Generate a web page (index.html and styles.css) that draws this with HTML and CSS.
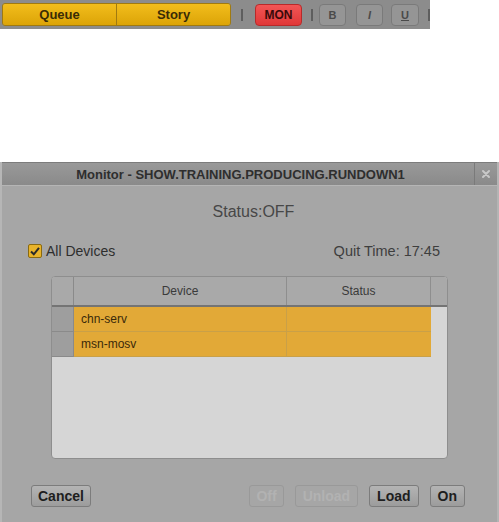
FILE: index.html
```html
<!DOCTYPE html>
<html lang="en">
  <head>
    <meta charset="UTF-8" />
    <title>Monitor</title>
    <link rel="stylesheet" href="styles.css">
  </head>
  <body>
    <!-- Toolbar -->
    <div class="toolbar">
      <div class="tab-group">
        <button class="tab">Queue</button>
        <button class="tab">Story</button>
      </div>
      <span class="sep"></span>
      <button class="tool mon">MON</button>
      <span class="sep"></span>
      <button class="tool bold">B</button>
      <button class="tool italic">I</button>
      <button class="tool underline">U</button>
      <span class="sep last"></span>
    </div>

    <!-- Monitor dialog -->
    <div class="dialog">
      <div class="dialog-title">
        <span class="title-text">Monitor - SHOW.TRAINING.PRODUCING.RUNDOWN1</span>
        <span class="close">
          <svg width="10" height="10" viewBox="0 0 10 10">
            <path d="M2 2 L8 8 M8 2 L2 8" stroke="#c8c8c8" stroke-width="2" stroke-linecap="round" />
          </svg>
        </span>
      </div>

      <div class="dialog-body">
        <div class="status">Status:OFF</div>

        <div class="options">
          <label class="check">
            <span class="box">
              <svg width="12" height="12" viewBox="0 0 12 12">
                <path d="M2 6.5 L4.8 9.3 L10 2.8" fill="none" stroke="#2a2a2a" stroke-width="2" />
              </svg>
            </span>
            All Devices
          </label>
          <span class="quit">Quit Time: 17:45</span>
        </div>

        <div class="table">
          <div class="row head">
            <div class="cell corner"></div>
            <div class="cell device">Device</div>
            <div class="cell state">Status</div>
            <div class="cell filler"></div>
          </div>
          <div class="row item">
            <div class="cell corner"></div>
            <div class="cell device">chn-serv</div>
            <div class="cell state"></div>
          </div>
          <div class="row item">
            <div class="cell corner"></div>
            <div class="cell device">msn-mosv</div>
            <div class="cell state"></div>
          </div>
        </div>

        <div class="actions">
          <button class="btn">Cancel</button>
          <div class="right-actions">
            <button class="btn disabled">Off</button>
            <button class="btn disabled">Unload</button>
            <button class="btn">Load</button>
            <button class="btn">On</button>
          </div>
        </div>
      </div>
    </div>
  </body>
</html>
```

FILE: styles.css
```css
body {
  margin: 0;
  background: #ffffff;
  font-family: "Liberation Sans", Arial, sans-serif;
  width: 499px;
  height: 522px;
  overflow: hidden;
}

button {
  font-family: "Liberation Sans", Arial, sans-serif;
  cursor: pointer;
}

/* Toolbar */
.toolbar {
  width: 430px;
  height: 29px;
  background: #8c8c8c;
  display: flex;
  align-items: center;
  padding-left: 2px;
  box-sizing: border-box;
  overflow: hidden;
}

.toolbar > * {
  flex-shrink: 0;
}

.tab-group {
  display: flex;
  height: 23px;
  border-radius: 3px;
  overflow: hidden;
  border: 1px solid #a07a10;
  box-sizing: border-box;
}

.tab {
  width: 113px;
  height: 100%;
  border: none;
  background: linear-gradient(#f2bd1c, #dca407);
  color: #3a2c05;
  font-weight: bold;
  font-size: 13px;
  padding: 0;
}

.tab + .tab {
  width: 114px;
  border-left: 1px solid #a07a10;
}

.sep {
  width: 2px;
  height: 12px;
  background: #5e5e5e;
  margin: 0 10px;
}

.sep.last {
  margin-left: 9px;
}

.tool {
  width: 27px;
  height: 22px;
  border: 1px solid #7a7a7a;
  border-radius: 4px;
  background: #959595;
  color: #4a4a4a;
  font-weight: bold;
  font-size: 11px;
  padding: 0;
}

.tool.mon {
  width: 47px;
  margin-left: 2px;
  margin-right: -1px;
  background: linear-gradient(#f25656, #e03838);
  border-color: #b82a2a;
  color: #3a0a0a;
  font-size: 12px;
}

.tool.bold {
  margin-left: -4px;
}

.tool.italic {
  font-style: italic;
  margin: 0 8px 0 10px;
}

.tool.underline {
  width: 28px;
  text-decoration: underline;
}

/* Dialog */
.dialog {
  margin-top: 133px;
  height: 360px;
  background: #a6a6a6;
  border-left: 2px solid #b6b6b6;
  border-right: 2px solid #b4b4b4;
  box-sizing: border-box;
}

.dialog-title {
  height: 22px;
  display: flex;
  align-items: center;
  background: linear-gradient(#999999, #8a8a8a);
  border-top: 1px solid #7c7c7c;
  border-bottom: 1px solid #b5b5b5;
}

.title-text {
  flex: 1;
  text-align: center;
  font-size: 13px;
  font-weight: bold;
  color: #2e2e2e;
  padding-left: 5px;
}

.close {
  width: 22px;
  height: 100%;
  border-left: 1px solid #7a7a7a;
  display: flex;
  align-items: center;
  justify-content: center;
}

.dialog-body {
  padding: 17px 49px 0 27px;
}

.status {
  text-align: center;
  font-size: 16px;
  color: #474747;
  padding-left: 30px;
}

.options {
  display: flex;
  justify-content: space-between;
  align-items: center;
  margin-top: 19px;
  height: 20px;
}

.check {
  display: flex;
  align-items: center;
  font-size: 14px;
  color: #2e2e2e;
  gap: 4px;
  margin-top: 1px;
  margin-left: -1px;
}

.box {
  width: 14px;
  height: 14px;
  background: #e8b32a;
  border: 1px solid #8a6a10;
  border-radius: 2px;
  display: flex;
  align-items: center;
  justify-content: center;
  box-sizing: border-box;
}

.quit {
  font-size: 14.5px;
  color: #3e3e3e;
  margin-top: 1px;
  margin-right: 8px;
}

/* Table */
.table {
  margin: 16px 0 0 22px;
  height: 181px;
  background: #d6d6d6;
  border: 1px solid #8e8e8e;
  border-radius: 4px;
  overflow: hidden;
}

.row {
  display: flex;
  height: 25px;
}

.row.head {
  height: 28px;
  background: #a9a9a9;
  border-bottom: 2px solid #747474;
}

.cell {
  box-sizing: border-box;
  font-size: 12px;
  color: #3a3a3a;
  display: flex;
  align-items: center;
}

.corner {
  width: 22px;
  background: #9e9e9e;
  border-right: 1px solid #8a8a8a;
}

.head .corner {
  background: #a9a9a9;
}

.device {
  width: 213px;
  border-right: 1px solid #8e8e8e;
}

.state {
  width: 144px;
}

.head .device,
.head .state {
  justify-content: center;
}

.head .state {
  border-right: 1px solid #8e8e8e;
}

.filler {
  flex: 1;
}

.item .corner {
  border-bottom: 1px solid #8a8a8a;
}

.item .device,
.item .state {
  background: #e2a937;
  color: #3a2a0a;
  border-bottom: 1px solid #c9a048;
}

.item .device {
  padding-left: 7px;
  border-right-color: #c9a048;
}

/* Buttons */
.actions {
  display: flex;
  justify-content: space-between;
  margin-top: 26px;
  padding-left: 2px;
}

.right-actions {
  display: flex;
  gap: 11px;
  margin-right: -17px;
}

.btn {
  height: 22px;
  padding: 0 7px;
  border: 1px solid #7c7c7c;
  border-radius: 3px;
  background: linear-gradient(#b4b4b4, #9c9c9c);
  font-size: 14px;
  font-weight: bold;
  color: #1e1e1e;
}

.btn:first-child {
  padding: 0 6px;
}

.btn.disabled {
  color: #b2b2b2;
  border-color: #999999;
  background: #a6a6a6;
}
```
